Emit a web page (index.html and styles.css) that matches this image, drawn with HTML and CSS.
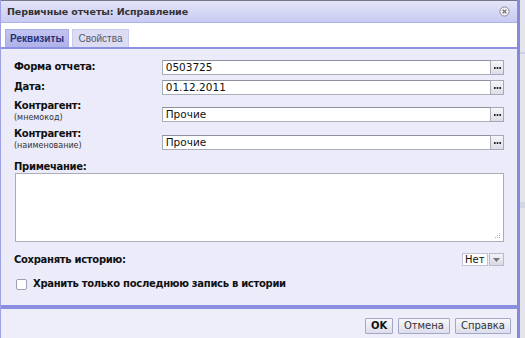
FILE: index.html
```html
<!DOCTYPE html>
<html lang="ru">
<head>
<meta charset="utf-8">
<title>Первичные отчеты: Исправление</title>
<link rel="stylesheet" href="styles.css">
</head>
<body>
<div class="screen">
  <div class="dialog">
    <div class="titlebar">
      <span class="title">Первичные отчеты: Исправление</span>
      <svg class="close" width="11" height="11" viewBox="0 0 11 11"><circle cx="5.5" cy="5.5" r="4.6" fill="#f2f2f6" stroke="#8a8a96" stroke-width="1"/><path d="M3.6 3.6 L7.4 7.4 M7.4 3.6 L3.6 7.4" stroke="#6a6a76" stroke-width="1.3"/></svg>
    </div>
    <div class="tabstrip">
      <div class="tab active">Реквизиты</div>
      <div class="tab">Свойства</div>
    </div>
    <div class="content">
      <div class="row r1">
        <div class="label">Форма отчета:</div>
        <div class="field"><div class="input">0503725</div><div class="dots"><svg width="7" height="2" viewBox="0 0 7 2"><rect x="0" y="0" width="1.6" height="2" fill="#222"/><rect x="2.7" y="0" width="1.6" height="2" fill="#222"/><rect x="5.4" y="0" width="1.6" height="2" fill="#222"/></svg></div></div>
      </div>
      <div class="row r2">
        <div class="label">Дата:</div>
        <div class="field"><div class="input">01.12.2011</div><div class="dots"><svg width="7" height="2" viewBox="0 0 7 2"><rect x="0" y="0" width="1.6" height="2" fill="#222"/><rect x="2.7" y="0" width="1.6" height="2" fill="#222"/><rect x="5.4" y="0" width="1.6" height="2" fill="#222"/></svg></div></div>
      </div>
      <div class="row r3">
        <div class="label two">Контрагент:<span class="sub">(мнемокод)</span></div>
        <div class="field low"><div class="input">Прочие</div><div class="dots"><svg width="7" height="2" viewBox="0 0 7 2"><rect x="0" y="0" width="1.6" height="2" fill="#222"/><rect x="2.7" y="0" width="1.6" height="2" fill="#222"/><rect x="5.4" y="0" width="1.6" height="2" fill="#222"/></svg></div></div>
      </div>
      <div class="row r4">
        <div class="label two">Контрагент:<span class="sub">(наименование)</span></div>
        <div class="field low"><div class="input">Прочие</div><div class="dots"><svg width="7" height="2" viewBox="0 0 7 2"><rect x="0" y="0" width="1.6" height="2" fill="#222"/><rect x="2.7" y="0" width="1.6" height="2" fill="#222"/><rect x="5.4" y="0" width="1.6" height="2" fill="#222"/></svg></div></div>
      </div>
      <div class="label note">Примечание:</div>
      <div class="textarea"><svg class="grip" width="7" height="7" viewBox="0 0 7 7"><rect x="5" y="1" width="1" height="1" fill="#aab"/><rect x="3" y="3" width="1" height="1" fill="#aab"/><rect x="5" y="3" width="1" height="1" fill="#aab"/><rect x="1" y="5" width="1" height="1" fill="#aab"/><rect x="3" y="5" width="1" height="1" fill="#aab"/><rect x="5" y="5" width="1" height="1" fill="#aab"/></svg></div>
      <div class="row r5">
        <div class="label">Сохранять историю:</div>
        <div class="select"><span class="sel-text">Нет</span><span class="sel-btn"><svg width="7" height="4" viewBox="0 0 7 4"><path d="M0 0 L7 0 L3.5 4 Z" fill="#777"/></svg></span></div>
      </div>
      <div class="row r6">
        <span class="checkbox"></span>
        <span class="label">Хранить только последнюю запись в истории</span>
      </div>
    </div>
    <div class="footer">
      <button class="btn ok">OK</button>
      <button class="btn">Отмена</button>
      <button class="btn">Справка</button>
    </div>
  </div>
  <div class="backdrop">
    <div class="bd-line l1"></div>
    <div class="bd-line l2"></div>
  </div>
</div>
</body>
</html>
```
FILE: styles.css
```css
html, body {
  margin: 0;
  padding: 0;
}
body {
  background: #e2e2ea;
  font-family: "DejaVu Sans", Verdana, sans-serif;
  color: #111;
}
.screen {
  display: flex;
  width: 525px;
  height: 338px;
  overflow: hidden;
}
.dialog {
  box-sizing: border-box;
  width: 520px;
  height: 338px;
  border-left: 1px solid #9da0e2;
  border-right: 3px solid #868ad9;
  display: flex;
  flex-direction: column;
  background: #ebebfa;
}
.titlebar {
  box-sizing: border-box;
  height: 23px;
  border-top: 1px solid #77778a;
  border-bottom: 1px solid #aeb0e8;
  background: linear-gradient(#e3e4f9, #c8caf1);
  display: flex;
  align-items: center;
  justify-content: space-between;
  padding: 0 7px 0 6px;
}
.title {
  font-size: 9.5px;
  font-weight: bold;
  color: #333;
  letter-spacing: -0.1px;
}
.close {
  display: block;
}
.tabstrip {
  box-sizing: border-box;
  height: 26px;
  background: #fff;
  border-bottom: 2px solid #8e92e2;
  display: flex;
  align-items: flex-end;
  gap: 3px;
  padding-left: 4px;
}
.tab {
  box-sizing: border-box;
  width: 57px;
  height: 18px;
  line-height: 18px;
  text-align: center;
  font-family: "Liberation Sans", Arial, sans-serif;
  font-size: 10px;
  background: #dcdcf5;
  color: #555a68;
  border: 1px solid #c9cbef;
  border-bottom: 0;
  white-space: nowrap;
}
.tab.active {
  width: 64px;
  background: linear-gradient(#c2c4f0, #afb2e9);
  color: #283275;
  font-weight: bold;
  border-color: #a9ace6;
}
.content {
  flex: 1;
  padding: 11px 13px 0 13px;
  display: flex;
  flex-direction: column;
}
.row {
  display: flex;
  align-items: flex-start;
}
.label {
  width: 148px;
  font-size: 10px;
  font-weight: bold;
  color: #111;
  line-height: 14px;
  letter-spacing: -0.3px;
}
.label.two {
  display: flex;
  flex-direction: column;
  line-height: 12px;
}
.sub {
  font-weight: normal;
  font-size: 8px;
  line-height: 11px;
  color: #333;
  letter-spacing: 0;
}
.field {
  display: flex;
  width: 343px;
  height: 15px;
}
.field.low {
  margin-top: 7px;
}
.input {
  flex: 1;
  box-sizing: border-box;
  height: 15px;
  background: #fff;
  border: 1px solid #a9adb8;
  border-top-color: #8b909c;
  font-size: 10.5px;
  line-height: 13px;
  padding-left: 3px;
  color: #111;
}
.dots {
  box-sizing: border-box;
  width: 13px;
  height: 15px;
  border: 1px solid #a4a8b8;
  border-left: 0;
  background: linear-gradient(#f6f6fa, #dcdde8);
  display: flex;
  align-items: center;
  justify-content: center;
}
.dots svg {
  display: block;
  margin-top: 1px;
}
.r2 { margin-top: 5px; }
.r3 { margin-top: 5px; }
.r4 { margin-top: 5px; }
.note {
  margin-top: 9px;
  line-height: 13px;
}
.textarea {
  box-sizing: border-box;
  width: 489px;
  height: 69px;
  margin-left: 1px;
  background: #fff;
  border: 1px solid #a9adb8;
  position: relative;
}
.grip {
  position: absolute;
  right: 2px;
  bottom: 2px;
}
.r5 {
  margin-top: 11px;
  justify-content: space-between;
  width: 490px;
}
.r5 .label {
  width: auto;
  line-height: 13px;
}
.select {
  display: flex;
  height: 13px;
  margin-right: 0;
}
.sel-text {
  box-sizing: border-box;
  width: 26px;
  height: 13px;
  background: #fff;
  border: 1px solid #c0c3d0;
  font-size: 10px;
  line-height: 11px;
  padding-left: 2px;
  color: #111;
}
.sel-btn {
  box-sizing: border-box;
  width: 15px;
  height: 13px;
  margin-left: 1px;
  border: 1px solid #b8bbcc;
  background: linear-gradient(#f2f2f8, #d8d9e6);
  display: flex;
  align-items: center;
  justify-content: center;
}
.sel-btn svg { display: block; }
.r6 {
  margin-top: 11px;
  align-items: center;
}
.checkbox {
  box-sizing: border-box;
  width: 11px;
  height: 11px;
  margin-left: 2px;
  margin-right: 6px;
  background: #fff;
  border: 1px solid #9ea2b2;
  border-radius: 2px;
}
.r6 .label {
  width: auto;
}
.footer {
  box-sizing: border-box;
  height: 33px;
  border-top: 4px solid #8a8ee0;
  background: #eeeefb;
  display: flex;
  justify-content: flex-end;
  align-items: flex-start;
  gap: 5px;
  padding: 9px 6px 0 0;
}
.btn {
  box-sizing: border-box;
  height: 16px;
  padding: 0 5px;
  border: 1px solid #a4a6c6;
  background: linear-gradient(#f6f6fb, #dddeec);
  font-family: "DejaVu Sans", Verdana, sans-serif;
  font-size: 10px;
  line-height: 14px;
  color: #333;
  border-radius: 1px;
}
.btn.ok {
  font-weight: bold;
  color: #111;
  width: 28px;
}
.backdrop {
  flex: 1;
  background: #e4e4ea;
  display: flex;
  flex-direction: column;
}
.bd-line {
  height: 2px;
  background: #cfd0dc;
}
.l1 { margin-top: 52px; }
.l2 { margin-top: 148px; height: 6px; background: #d4d6e6; }
```
